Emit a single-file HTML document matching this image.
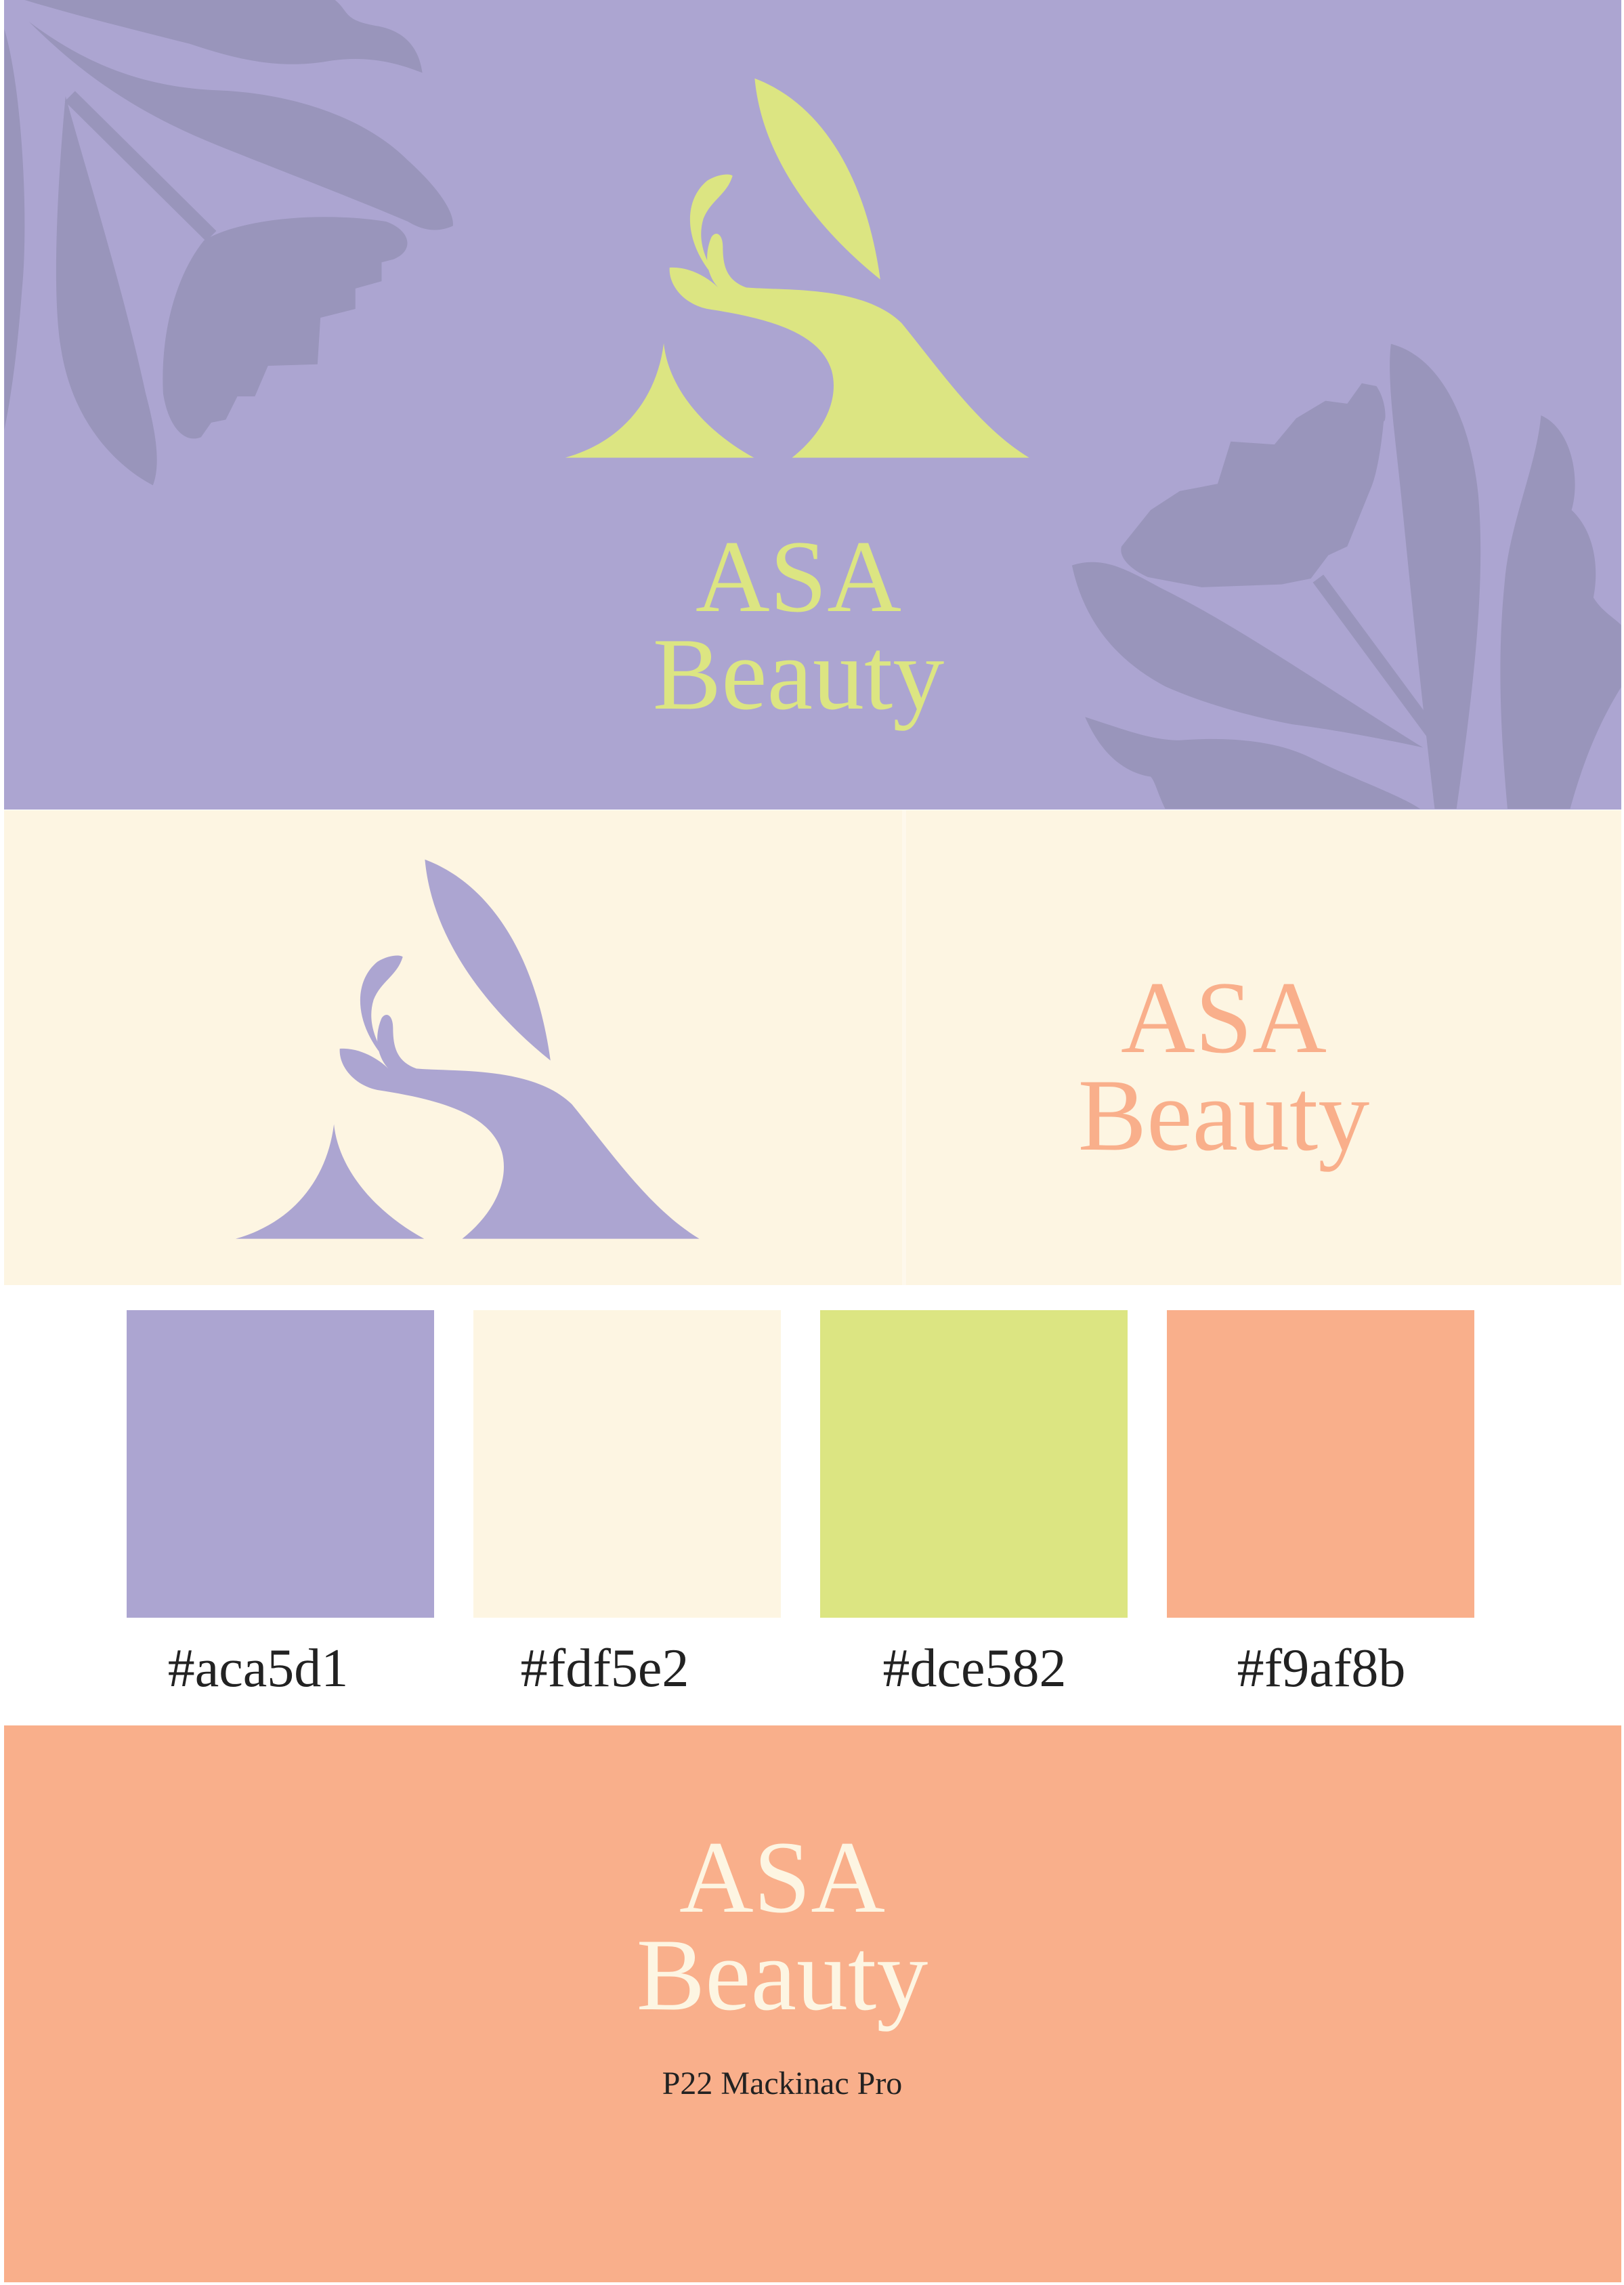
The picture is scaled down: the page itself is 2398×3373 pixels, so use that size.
<!DOCTYPE html>
<html><head><meta charset="utf-8">
<style>
html,body{margin:0;padding:0;background:#fff;}
body{width:2398px;height:3373px;position:relative;overflow:hidden;font-family:"Liberation Serif",serif;}
.abs{position:absolute;}
.word{position:absolute;text-align:center;line-height:144px;font-size:152px;}
.hex{position:absolute;top:2418px;width:512px;text-align:center;font-size:80px;color:#222;}
</style></head><body>
<div class="abs" style="left:6px;top:0;width:2388px;height:1195px;background:#aca5d1;"></div>
<div class="abs" style="left:6px;top:1196px;width:2388px;height:701px;background:#fdf5e2;"></div>
<div class="abs" style="left:1332px;top:1196px;width:6px;height:701px;background:#fef8ec;"></div>
<div class="abs" style="left:187px;top:1934px;width:454px;height:454px;background:#aca5d1;"></div>
<div class="abs" style="left:699px;top:1934px;width:454px;height:454px;background:#fdf5e2;"></div>
<div class="abs" style="left:1211px;top:1934px;width:454px;height:454px;background:#dce582;"></div>
<div class="abs" style="left:1723px;top:1934px;width:454px;height:454px;background:#f9af8b;"></div>
<div class="abs" style="left:6px;top:2547px;width:2388px;height:822px;background:#f9af8b;"></div>

<svg class="abs" style="left:0;top:0" width="2398" height="3373" viewBox="0 0 1115 1568" preserveAspectRatio="none">
<defs><clipPath id="c"><rect x="3" y="0" width="1110" height="555.5"/></clipPath></defs>
<g fill="#9995bb" clip-path="url(#c)">
<path d="M17,0 L230,0 C240,8 235,14 260,18 C280,22 288,35 290,50 C270,42 250,38 225,42 C190,48 160,40 130,30 C90,20 50,10 17,0Z"/>
<path d="M20,15 C60,45 100,60 150,62 C200,64 250,80 280,110 C300,128 312,145 311,155 C300,160 290,158 280,152 C240,135 200,120 150,100 C100,80 60,55 20,15Z"/>
<path d="M48,66 L145,162" stroke="#9995bb" stroke-width="10" fill="none"/>
<path d="M140,165 C165,150 220,145 265,152 C282,158 285,172 270,178 L262,180 262,193 244,198 244,212 220,218 218,250 184,251 175,272 163,272 155,288 145,290 138,300 C125,305 115,290 112,270 C110,230 120,190 140,165Z"/>
<path d="M45,66 C40,120 35,200 42,240 C50,290 80,320 105,333 C110,320 108,300 100,270 C85,200 60,120 45,66Z"/>
<path d="M3,20 C15,60 20,150 15,200 C12,240 8,270 3,295Z"/>
<path d="M770,375 L790,350 810,337 836,332 845,303 875,305 890,287 910,275 925,277 935,263 945,265 C952,275 952,290 950,289 C948,310 945,325 942,333 L925,375 912,381 900,397 880,401 825,403 788,396 C775,390 768,382 770,375Z"/>
<path d="M905,397 L987,508" stroke="#9995bb" stroke-width="9" fill="none"/>
<path d="M736,388 C760,380 780,395 800,405 C850,430 900,465 977,513 C940,505 910,500 887,497 C850,490 820,480 800,471 C770,455 745,430 736,388Z"/>
<path d="M745,492 C770,500 790,508 810,508 C850,505 880,510 900,520 C930,535 960,545 975,555 L800,555 C795,545 793,536 790,533 C770,530 755,515 745,492Z"/>
<path d="M955,236 C990,245 1010,290 1015,340 C1020,400 1012,470 1000,555 L985,555 C975,470 968,400 962,340 C958,300 952,260 955,236Z"/>
<path d="M1058,285 C1080,295 1085,330 1079,350 C1095,365 1098,390 1094,410 C1100,420 1110,425 1114,430 L1114,470 C1095,500 1085,530 1078,555 L1035,555 C1030,500 1028,450 1033,400 C1036,360 1055,320 1058,285Z"/>
</g>
</svg>

<svg class="abs" style="left:700px;top:0" width="900" height="1100" viewBox="0 0 1568 1568" preserveAspectRatio="none">
<g fill="#dce582">
<path d="M722,165 C900,220 1010,380 1045,588 C880,480 740,330 722,165Z"/>
<path d="M235,963 C380,930 470,840 488,722 C500,820 600,910 720,963Z"/>
<path d="M818,963 C900,910 940,840 920,780 C890,700 760,670 600,650 C540,640 500,600 503,563 C560,560 610,590 628,605 C600,580 590,540 610,500 C620,485 640,490 640,520 C640,560 650,590 700,605 C800,612 1000,600 1100,680 C1200,780 1300,900 1428,963Z"/>
<path d="M605,570 C540,500 540,420 600,380 C630,365 660,365 665,370 C650,410 610,420 590,460 C575,500 590,540 618,575Z"/>
</g>
</svg>
<svg class="abs" style="left:213px;top:1153px" width="900" height="1100" viewBox="0 0 1568 1568" preserveAspectRatio="none">
<g fill="#aca5d1">
<path d="M722,165 C900,220 1010,380 1045,588 C880,480 740,330 722,165Z"/>
<path d="M235,963 C380,930 470,840 488,722 C500,820 600,910 720,963Z"/>
<path d="M818,963 C900,910 940,840 920,780 C890,700 760,670 600,650 C540,640 500,600 503,563 C560,560 610,590 628,605 C600,580 590,540 610,500 C620,485 640,490 640,520 C640,560 650,590 700,605 C800,612 1000,600 1100,680 C1200,780 1300,900 1428,963Z"/>
<path d="M605,570 C540,500 540,420 600,380 C630,365 660,365 665,370 C650,410 610,420 590,460 C575,500 590,540 618,575Z"/>
</g>
</svg>

<div class="word" style="left:779px;top:779px;width:800px;color:#dce582;">ASA<br>Beauty</div>
<div class="word" style="left:1407px;top:1430px;width:800px;color:#f9af8b;">ASA<br>Beauty</div>
<div class="word" style="left:755px;top:2699px;width:800px;color:#fdf5e2;">ASA<br>Beauty</div>
<div class="abs" style="left:755px;top:3048px;width:800px;text-align:center;font-size:48px;color:#222;">P22 Mackinac Pro</div>

<div class="hex" style="left:125px;">#aca5d1</div>
<div class="hex" style="left:637px;">#fdf5e2</div>
<div class="hex" style="left:1183px;">#dce582</div>
<div class="hex" style="left:1695px;">#f9af8b</div>
</body></html>
